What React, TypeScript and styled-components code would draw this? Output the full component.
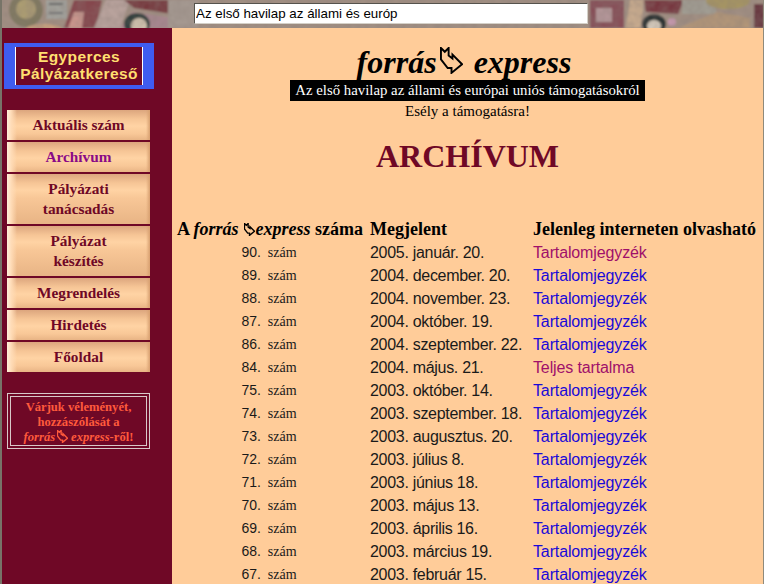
import React from "react";
import styled, { createGlobalStyle } from "styled-components";

const GlobalStyle = createGlobalStyle`
  html, body {
    margin: 0;
    padding: 0;
    height: 100%;
    overflow: hidden;
    background: #ffcc99;
  }
`;

const Page = styled.div`
  box-sizing: border-box;
  width: 764px;
  height: 584px;
  overflow: hidden;
  display: flex;
  flex-direction: column;
  border-left: 2px solid #777468;
  border-right: 1px solid #8f8a7c;
`;

const Banner = styled.div`
  position: relative;
  flex: none;
  height: 28px;
  overflow: hidden;
  background: #a08b7c;
  display: flex;
  align-items: flex-start;
  padding: 3px 0 0 192px;
  box-sizing: border-box;
`;

const BannerArt = styled.svg`
  position: absolute;
  left: 0;
  top: 0;
`;

const SearchText = styled.input`
  position: relative;
  box-sizing: border-box;
  width: 394px;
  height: 21px;
  margin: 0;
  padding: 0 1px;
  font: 13.33px "Liberation Sans", Arial, sans-serif;
  color: #000;
  background: #fff;
  border: 1px solid;
  border-color: #55524c #d4d0c8 #d4d0c8 #55524c;
  outline: none;
`;

const Body = styled.div`
  flex: 1;
  display: flex;
  min-height: 0;
`;

const Sidebar = styled.aside`
  flex: none;
  box-sizing: border-box;
  width: 170px;
  background: #6f0826;
  padding: 15px 0 0 2px;
`;

const SearchLogo = styled.a`
  box-sizing: border-box;
  display: block;
  width: 150px;
  height: 46px;
  padding: 4px 11px;
  background: #3f5cf0;
`;

const SearchLogoInner = styled.div`
  box-sizing: border-box;
  height: 38px;
  background: #6f0826;
  border-left: 1px solid #fff;
  border-right: 1px solid #fff;
  color: #ffdf70;
  font: bold 15.5px/17px "Liberation Sans", Arial, sans-serif;
  letter-spacing: 0.4px;
  text-align: center;
  padding-top: 1px;
`;

const Menu = styled.nav`
  display: flex;
  flex-direction: column;
  gap: 2px;
  margin: 21px 0 0 3px;
  width: 143px;
`;

const MenuItem = styled.a<{ $visited?: boolean; $tall?: boolean }>`
  box-sizing: border-box;
  display: flex;
  align-items: center;
  justify-content: center;
  text-align: center;
  height: ${(p) => (p.$tall ? "50px" : "30px")};
  color: ${(p) => (p.$visited ? "#8a0a86" : "#6f0826")};
  font: bold 15.3px/20px "Liberation Serif", "Times New Roman", serif;
  background:
    linear-gradient(90deg, #fff0d8 0, #ffdcb8 4px, rgba(255, 204, 153, 0) 10px),
    linear-gradient(270deg, #d8a070 0, rgba(255, 204, 153, 0) 4px),
    linear-gradient(180deg, #dca67e 0, #f6c596 9px, #ffd3a4 16px, #f8c797 24px, #e8b485 100%);
`;

const Feedback = styled.div`
  box-sizing: border-box;
  margin: 21px 0 0 3px;
  width: 143px;
  height: 56px;
  padding: 2px;
  border: 1px solid #d8c8c8;
`;

const FeedbackInner = styled.div`
  box-sizing: border-box;
  height: 100%;
  border: 1px solid #d8c8c8;
  color: #ff5a3c;
  font: bold 12.6px/15px "Liberation Serif", "Times New Roman", serif;
  text-align: center;
  padding-top: 3px;
  white-space: nowrap;
`;

const FeedbackArrow = styled.svg`
  margin: 0 3px -2px 2px;
`;

const Content = styled.main`
  flex: 1;
  min-width: 0;
  background: #ffcc99;
  padding-top: 14px;
  overflow: hidden;
`;

const Masthead = styled.h1`
  display: flex;
  justify-content: center;
  align-items: flex-start;
  margin: 0;
  padding-right: 7px;
  height: 38px;
  color: #000;
  font: italic bold 32px/40px "Liberation Serif", "Times New Roman", serif;
  white-space: nowrap;
`;

const TitleArrow = styled.svg`
  margin: 5px 11px 0 3px;
`;

const Strap = styled.div`
  width: 355px;
  height: 21px;
  margin: 0 auto;
  background: #000;
  color: #fff;
  font: 14.8px/21px "Liberation Serif", "Times New Roman", serif;
  text-align: center;
  white-space: nowrap;
`;

const Motto = styled.div`
  margin-top: 1px;
  text-align: center;
  color: #000;
  font: 15px/18px "Liberation Serif", "Times New Roman", serif;
`;

const PageTitle = styled.h2`
  margin: 18px 0 0;
  text-align: center;
  color: #6f0826;
  font: bold 32px/37px "Liberation Serif", "Times New Roman", serif;
`;

const Issues = styled.table`
  margin: 42px 0 0 2px;
  border-collapse: collapse;
  table-layout: fixed;
  width: 590px;
`;

const HeadCell = styled.th`
  padding: 0 0 0 3px;
  height: 24px;
  text-align: left;
  vertical-align: middle;
  color: #000;
  font: bold 18px/20px "Liberation Serif", "Times New Roman", serif;
  white-space: nowrap;
`;

const HeadArrow = styled.svg`
  margin: 0 1px -1px 5px;
`;

const NumberCell = styled.td`
  height: 23px;
  padding: 0 3px 0 0;
  text-align: center;
  color: #1a1a1a;
  font: 14px/23px "Liberation Sans", Arial, sans-serif;
  white-space: nowrap;
`;

const Word = styled.span`
  margin-left: 3px;
  font-family: "Liberation Serif", "Times New Roman", serif;
`;

const DateCell = styled.td`
  padding: 0 0 0 3px;
  color: #1a1a1a;
  font: 16px/23px "Liberation Sans", Arial, sans-serif;
  letter-spacing: -0.3px;
  white-space: nowrap;
`;

const LinkCell = styled.td`
  padding: 0 0 0 3px;
  font: 16px/23px "Liberation Sans", Arial, sans-serif;
  letter-spacing: -0.13px;
  white-space: nowrap;
`;

const IssueLink = styled.a<{ $visited?: boolean }>`
  color: ${(p) => (p.$visited ? "#a0106a" : "#1a0ad8")};
`;

const ARROW = "M1 1L5 5L9 1L9 9L13 12L13 8L23 18L12 27L12 22L8 22L1 13Z";

const Arrow = ({ as: Svg, size, color, fill }: any) => (
  <Svg width={size} height={(size * 28) / 24} viewBox="0 0 24 28">
    <path d={ARROW} fill={fill} stroke={color} strokeWidth={size < 16 ? 3 : 2} />
  </Svg>
);

const issues = [
  ["90", "2005. január. 20.", "Tartalomjegyzék", true],
  ["89", "2004. december. 20.", "Tartalomjegyzék"],
  ["88", "2004. november. 23.", "Tartalomjegyzék"],
  ["87", "2004. október. 19.", "Tartalomjegyzék"],
  ["86", "2004. szeptember. 22.", "Tartalomjegyzék"],
  ["84", "2004. május. 21.", "Teljes tartalma", true],
  ["75", "2003. október. 14.", "Tartalomjegyzék"],
  ["74", "2003. szeptember. 18.", "Tartalomjegyzék"],
  ["73", "2003. augusztus. 20.", "Tartalomjegyzék"],
  ["72", "2003. július 8.", "Tartalomjegyzék"],
  ["71", "2003. június 18.", "Tartalomjegyzék"],
  ["70", "2003. május 13.", "Tartalomjegyzék"],
  ["69", "2003. április 16.", "Tartalomjegyzék"],
  ["68", "2003. március 19.", "Tartalomjegyzék"],
  ["67", "2003. február 15.", "Tartalomjegyzék"],
] as const;

// money photo behind the search field, roughly painted
function BannerPicture() {
  return (
    <BannerArt width="762" height="28" viewBox="0 0 762 28">
      <defs>
        <filter id="soft">
          <feGaussianBlur stdDeviation="1" />
        </filter>
        <filter id="grain">
          <feTurbulence type="fractalNoise" baseFrequency="0.12" numOctaves="2" seed="4" />
          <feColorMatrix values="0 0 0 0 0.25  0 0 0 0 0.2  0 0 0 0 0.18  0.5 0 0 0 -0.12" />
        </filter>
      </defs>
      <g filter="url(#soft)">
        <rect x="-4" y="-4" width="780" height="36" fill="#a08e82" />
        <circle cx="24" cy="10" r="17" fill="#7f7860" />
        <circle cx="24" cy="9" r="10" fill="#ab9c72" />
        <rect x="44" y="0" width="21" height="19" fill="#a2a29c" />
        <rect x="47" y="3" width="14" height="2" fill="#5d6062" />
        <rect x="47" y="12" width="14" height="2" fill="#6e7072" />
        <ellipse cx="42" cy="29" rx="18" ry="5" fill="#c6a07e" />
        <polygon points="62,28 72,0 100,0 94,28" fill="#85474e" />
        <polygon points="66,28 72,12 82,12 80,28" fill="#c8948c" />
        <polygon points="92,28 104,0 128,0 118,28" fill="#b8a29c" />
        <polygon points="122,0 168,0 170,14 132,8" fill="#773a40" />
        <polygon points="118,28 130,12 185,20 176,28" fill="#a88790" />
        <ellipse cx="135" cy="24" rx="13" ry="11" fill="#2f3d3a" />
        <ellipse cx="137" cy="26" rx="8" ry="8" fill="#d0c3af" />
        <rect x="166" y="0" width="30" height="28" fill="#a49890" />
        <rect x="588" y="0" width="34" height="28" fill="#874f58" />
        <rect x="594" y="8" width="16" height="14" fill="#b39598" />
        <polygon points="628,0 642,0 638,28 624,28" fill="#c8ab8e" />
        <polygon points="642,0 682,0 676,14 644,12" fill="#773740" />
        <ellipse cx="652" cy="24" rx="12" ry="10" fill="#2b3232" />
        <ellipse cx="652" cy="26" rx="7" ry="6" fill="#d6ccbe" />
        <circle cx="670" cy="22" r="4" fill="#c89ab0" />
        <rect x="680" y="0" width="34" height="14" fill="#a09c92" />
        <ellipse cx="726" cy="1" rx="22" ry="8" fill="#a59464" />
        <polygon points="676,28 716,12 748,18 748,28" fill="#b19578" />
        <rect x="752" y="4" width="10" height="24" fill="#673840" />
      </g>
      <rect width="762" height="28" filter="url(#grain)" />
    </BannerArt>
  );
}

export default function App() {
  return (
    <>
      <GlobalStyle />
      <Page>
        <Banner>
          <BannerPicture />
          <SearchText readOnly value="Az első havilap az állami és európ" />
        </Banner>
        <Body>
          <Sidebar>
            <SearchLogo>
              <SearchLogoInner>
                Egyperces
                <br />
                Pályázatkereső
              </SearchLogoInner>
            </SearchLogo>
            <Menu>
              <MenuItem>Aktuális szám</MenuItem>
              <MenuItem $visited>Archívum</MenuItem>
              <MenuItem $tall>
                Pályázati
                <br />
                tanácsadás
              </MenuItem>
              <MenuItem $tall>
                Pályázat
                <br />
                készítés
              </MenuItem>
              <MenuItem>Megrendelés</MenuItem>
              <MenuItem>Hirdetés</MenuItem>
              <MenuItem>Főoldal</MenuItem>
            </Menu>
            <Feedback>
              <FeedbackInner>
                Várjuk véleményét,
                <br />
                hozzászólását a
                <br />
                <i>forrás</i>
                <Arrow as={FeedbackArrow} size={11} color="#ff5a3c" fill="none" />
                <i>express</i>-ről!
              </FeedbackInner>
            </Feedback>
          </Sidebar>
          <Content>
            <Masthead>
              forrás
              <Arrow as={TitleArrow} size={23} color="#000" fill="none" />
              express
            </Masthead>
            <Strap>Az első havilap az állami és európai uniós támogatásokról</Strap>
            <Motto>Esély a támogatásra!</Motto>
            <PageTitle>ARCHÍVUM</PageTitle>
            <Issues>
              <colgroup>
                <col width="193" />
                <col width="163" />
                <col />
              </colgroup>
              <thead>
                <tr>
                  <HeadCell>
                    A <i>forrás</i>
                    <Arrow as={HeadArrow} size={11} color="#000" fill="none" />
                    <i>express</i> száma
                  </HeadCell>
                  <HeadCell>Megjelent</HeadCell>
                  <HeadCell>Jelenleg interneten olvasható</HeadCell>
                </tr>
              </thead>
              <tbody>
                {issues.map(([num, date, label, visited]) => (
                  <tr key={num}>
                    <NumberCell>
                      {num}. <Word>szám</Word>
                    </NumberCell>
                    <DateCell>{date}</DateCell>
                    <LinkCell>
                      <IssueLink $visited={visited}>{label}</IssueLink>
                    </LinkCell>
                  </tr>
                ))}
              </tbody>
            </Issues>
          </Content>
        </Body>
      </Page>
    </>
  );
}
